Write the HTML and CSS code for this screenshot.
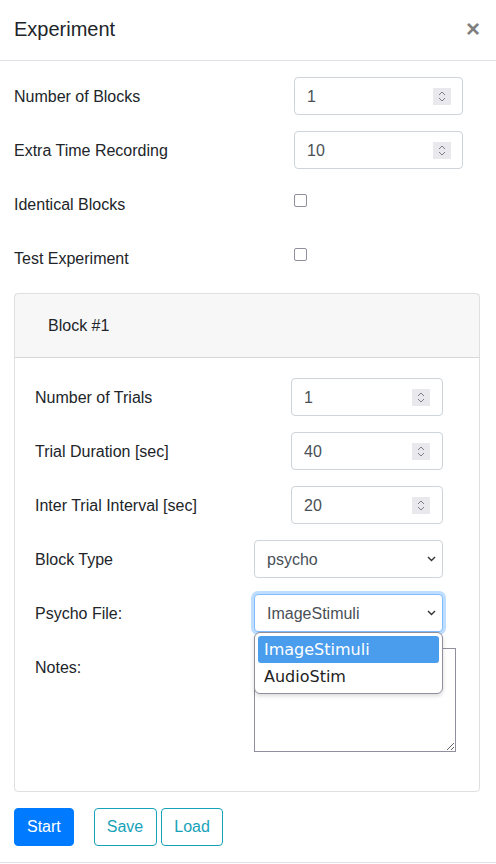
FILE: index.html
```html
<!DOCTYPE html>
<html lang="en">
<head>
<meta charset="utf-8">
<title>Experiment</title>
<link rel="stylesheet" href="styles.css">
</head>
<body>
<div class="modal">
  <div class="modal-header">
    <h5 class="modal-title">Experiment</h5>
    <button class="close" type="button">×</button>
  </div>
  <div class="modal-body">
    <div class="form-row">
      <label class="lbl">Number of Blocks</label>
      <div class="num top-num"><input class="num-input" value="1"><svg class="spin" width="18" height="17" viewBox="0 0 18 17"><rect width="18" height="17" fill="#e9e9ed"/><path d="M6 7 L9 4 L12 7 M6 10 L9 13 L12 10" fill="none" stroke="#7e7e88" stroke-width="1"/></svg></div>
    </div>
    <div class="form-row">
      <label class="lbl">Extra Time Recording</label>
      <div class="num top-num"><input class="num-input" value="10"><svg class="spin" width="18" height="17" viewBox="0 0 18 17"><rect width="18" height="17" fill="#e9e9ed"/><path d="M6 7 L9 4 L12 7 M6 10 L9 13 L12 10" fill="none" stroke="#7e7e88" stroke-width="1"/></svg></div>
    </div>
    <div class="form-row">
      <label class="lbl">Identical Blocks</label>
      <span class="check"></span>
    </div>
    <div class="form-row">
      <label class="lbl">Test Experiment</label>
      <span class="check"></span>
    </div>

    <div class="card">
      <div class="card-header">
        <button class="btn-link" type="button">Block #1</button>
      </div>
      <div class="card-body">
        <div class="form-row">
          <label class="lbl lbl-card">Number of Trials</label>
          <div class="num card-num"><input class="num-input" value="1"><svg class="spin" width="18" height="17" viewBox="0 0 18 17"><rect width="18" height="17" fill="#e9e9ed"/><path d="M6 7 L9 4 L12 7 M6 10 L9 13 L12 10" fill="none" stroke="#7e7e88" stroke-width="1"/></svg></div>
        </div>
        <div class="form-row">
          <label class="lbl lbl-card">Trial Duration [sec]</label>
          <div class="num card-num"><input class="num-input" value="40"><svg class="spin" width="18" height="17" viewBox="0 0 18 17"><rect width="18" height="17" fill="#e9e9ed"/><path d="M6 7 L9 4 L12 7 M6 10 L9 13 L12 10" fill="none" stroke="#7e7e88" stroke-width="1"/></svg></div>
        </div>
        <div class="form-row">
          <label class="lbl lbl-card">Inter Trial Interval [sec]</label>
          <div class="num card-num"><input class="num-input" value="20"><svg class="spin" width="18" height="17" viewBox="0 0 18 17"><rect width="18" height="17" fill="#e9e9ed"/><path d="M6 7 L9 4 L12 7 M6 10 L9 13 L12 10" fill="none" stroke="#7e7e88" stroke-width="1"/></svg></div>
        </div>
        <div class="form-row">
          <label class="lbl lbl-card">Block Type</label>
          <div class="sel"><span class="sel-text">psycho</span><svg class="chev" width="9" height="6" viewBox="0 0 9 6"><path d="M1 1 L4.5 4.5 L8 1" fill="none" stroke="#333" stroke-width="1.4"/></svg></div>
        </div>
        <div class="form-row">
          <label class="lbl lbl-card">Psycho File:</label>
          <div class="sel sel-focus"><span class="sel-text">ImageStimuli</span><svg class="chev" width="9" height="6" viewBox="0 0 9 6"><path d="M1 1 L4.5 4.5 L8 1" fill="none" stroke="#333" stroke-width="1.4"/></svg>
            <div class="popup">
              <div class="opt opt-selected">ImageStimuli</div>
              <div class="opt">AudioStim</div>
            </div>
          </div>
        </div>
        <div class="form-row">
          <label class="lbl lbl-card">Notes:</label>
          <textarea class="notes"></textarea>
        </div>
      </div>
    </div>

    <div class="actions">
      <button class="btn btn-primary" type="button">Start</button>
      <button class="btn btn-outline save" type="button">Save</button>
      <button class="btn btn-outline load" type="button">Load</button>
    </div>
  </div>
  <div class="modal-footer"></div>
</div>
</body>
</html>
```
FILE: styles.css
```css
html, body {
  margin: 0;
  padding: 0;
  overflow: hidden;
  background: #fff;
}
body {
  font-family: "Liberation Sans", Arial, sans-serif;
  font-size: 16px;
  line-height: 24px;
  color: #212529;
}
.modal {
  width: 496px;
}
.modal-header {
  display: flex;
  justify-content: space-between;
  align-items: flex-start;
  padding: 14px 16px 16px 14px;
  border-bottom: 1px solid #dee2e6;
}
.modal-title {
  margin: 0;
  font-size: 20px;
  line-height: 30px;
  font-weight: 400;
}
.close {
  border: 0;
  background: none;
  padding: 0;
  margin-top: 3px;
  font-family: "Liberation Sans", Arial, sans-serif;
  font-size: 24px;
  font-weight: 700;
  line-height: 24px;
  color: #000;
  opacity: .5;
}
.modal-body {
  padding: 16px 16px 16px 14px;
}
.form-row {
  display: flex;
  align-items: flex-start;
  margin-bottom: 16px;
  min-height: 38px;
}
.lbl {
  width: 280px;
  flex: none;
  padding: 8px 0 6px;
  line-height: 24px;
}
.lbl-card {
  width: 219px;
}
.num {
  box-sizing: border-box;
  height: 38px;
  border: 1px solid #ced4da;
  border-radius: 4px;
  display: flex;
  align-items: center;
  padding: 0 11px 0 12px;
  background: #fff;
}
.top-num {
  width: 169px;
}
.card-num {
  width: 152px;
  margin-left: 37px;
  padding-right: 12px;
}
.num-input {
  flex: 1;
  min-width: 0;
  border: 0;
  padding: 0;
  margin: 0;
  outline: none;
  background: transparent;
  font-family: "Liberation Sans", Arial, sans-serif;
  font-size: 16px;
  line-height: 24px;
  height: 24px;
  margin-top: 2px;
  color: #495057;
}
.spin {
  flex: none;
  display: block;
}
.check {
  box-sizing: border-box;
  width: 13px;
  height: 13px;
  margin-top: 9px;
  border: 1px solid #8f8f9d;
  border-radius: 2px;
  background: #fff;
}
.card {
  border: 1px solid rgba(0,0,0,.125);
  border-radius: 4px;
  margin-bottom: 16px;
}
.card-header {
  padding: 13px 20px 12px;
  background: rgba(0,0,0,.03);
  border-bottom: 1px solid rgba(0,0,0,.125);
}
.btn-link {
  display: block;
  padding: 6px 12px;
  border: 1px solid transparent;
  background: none;
  font-family: "Liberation Sans", Arial, sans-serif;
  font-size: 16px;
  line-height: 24px;
  color: #212529;
}
.card-body {
  padding: 20px 20px 23px 20px;
}
.sel {
  position: relative;
  box-sizing: border-box;
  width: 189px;
  height: 38px;
  border: 1px solid #ced4da;
  border-radius: 4px;
  display: flex;
  align-items: center;
  padding: 0 6px 0 12px;
  color: #495057;
  background: #fff;
}
.sel-focus {
  border-color: #80bdff;
  box-shadow: 0 0 0 3px rgba(0,123,255,.25);
}
.sel-text {
  flex: 1;
  padding-top: 2px;
}
.chev {
  flex: none;
  display: block;
}
.popup {
  position: absolute;
  z-index: 5;
  top: 37px;
  left: -1px;
  width: 189px;
  box-sizing: border-box;
  padding: 3px;
  border: 1px solid #8f8f9d;
  border-radius: 6px;
  background: #fff;
  box-shadow: 0 2px 4px rgba(0,0,0,.15);
  font-family: "DejaVu Sans", sans-serif;
  font-size: 16px;
  color: #222;
}
.opt {
  height: 27px;
  line-height: 27px;
  padding: 0 6px;
  border-radius: 3px;
}
.opt-selected {
  background: #4a9ded;
  color: #fff;
}
.notes {
  display: block;
  box-sizing: border-box;
  width: 202px;
  height: 104px;
  margin: 0;
  padding: 2px;
  border: 1px solid #8f8f9d;
  border-radius: 0;
  font-family: "DejaVu Sans Mono", monospace;
  font-size: 13px;
  resize: both;
}
.actions {
  display: flex;
  align-items: center;
}
.btn {
  padding: 6px 12px;
  border: 1px solid transparent;
  border-radius: 4px;
  font-family: "Liberation Sans", Arial, sans-serif;
  font-size: 16px;
  line-height: 24px;
  background: transparent;
}
.btn-primary {
  background: #007bff;
  border-color: #007bff;
  color: #fff;
}
.btn-outline {
  border-color: #17a2b8;
  color: #17a2b8;
}
.save {
  margin-left: 20px;
  padding-right: 13px;
}
.load {
  margin-left: 4px;
}
.modal-footer {
  border-top: 1px solid #dee2e6;
  height: 20px;
}
```
